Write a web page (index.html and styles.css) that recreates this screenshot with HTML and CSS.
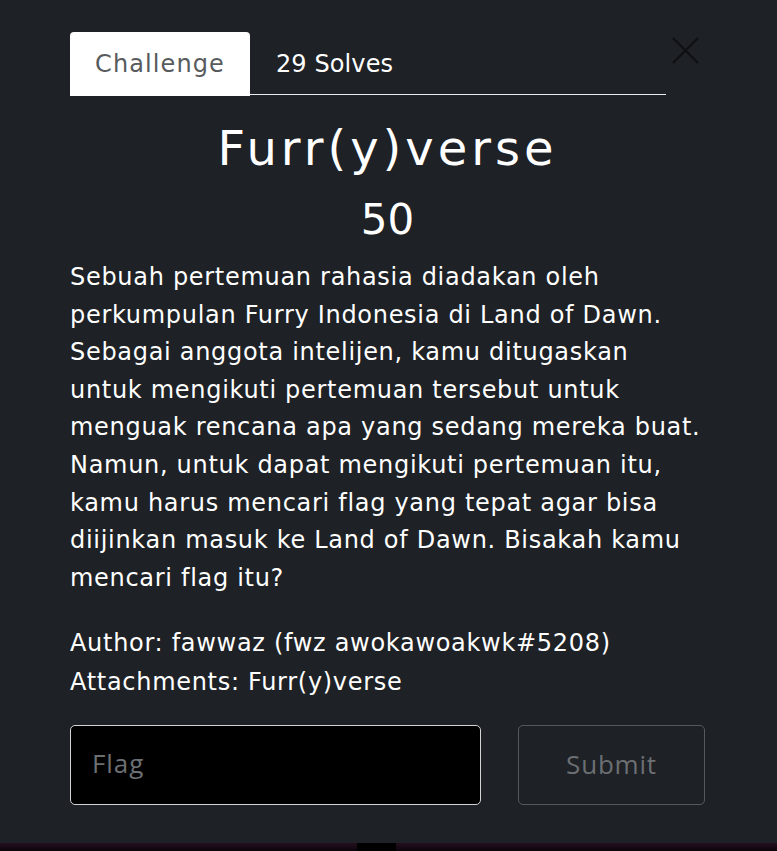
FILE: index.html
```html
<!DOCTYPE html>
<html lang="id">
<head>
<meta charset="utf-8">
<title>Furr(y)verse</title>
<link rel="stylesheet" href="styles.css">
</head>
<body>
<div class="modal">
  <div class="modal-body">
    <div class="header">
      <nav class="tabs">
        <a class="tab active">Challenge</a>
        <a class="tab">29 Solves</a>
      </nav>
      <button class="close" aria-label="Close">
        <svg width="27" height="27" viewBox="0 0 27 27"><path d="M1 1 L26 26 M26 1 L1 26" stroke="#0f1013" stroke-width="2.2" fill="none"/></svg>
      </button>
    </div>
    <h2 class="title">Furr(y)verse</h2>
    <h3 class="value">50</h3>
    <p class="desc">Sebuah pertemuan rahasia diadakan oleh<br>perkumpulan Furry Indonesia di Land of Dawn.<br>Sebagai anggota intelijen, kamu ditugaskan<br>untuk mengikuti pertemuan tersebut untuk<br>menguak rencana apa yang sedang mereka buat.<br>Namun, untuk dapat mengikuti pertemuan itu,<br>kamu harus mencari flag yang tepat agar bisa<br>diijinkan masuk ke Land of Dawn. Bisakah kamu<br>mencari flag itu?</p>
    <p class="meta">Author: fawwaz (fwz awokawoakwk#5208)<br>Attachments: Furr(y)verse</p>
    <form class="submit-row">
      <input class="flag" type="text" placeholder="Flag">
      <button class="submit" type="button">Submit</button>
    </form>
  </div>
</div>
<div class="strip">
  <div class="strip-left"></div>
  <div class="strip-gap"></div>
  <div class="strip-right"></div>
</div>
</body>
</html>
```

FILE: styles.css
```css
* { box-sizing: border-box; }
html, body { margin: 0; padding: 0; }
body {
  background: #1e2125;
  font-family: "DejaVu Sans", sans-serif;
  color: #ffffff;
  width: 777px;
  height: 851px;
  overflow: hidden;
}
.modal {
  height: 843px;
  padding: 32px 0 0 70px;
}
.modal-body {
  width: 635px;
}
.header {
  display: flex;
  align-items: flex-start;
}
.tabs {
  display: flex;
  width: 596px;
  height: 63px;
  border-bottom: 1px solid #e9ecef;
}
.tab {
  display: flex;
  align-items: center;
  height: 64px;
  padding: 0 26px 1px;
  font-size: 24px;
  letter-spacing: 0.1px;
  color: #ffffff;
  border-radius: 4px 4px 0 0;
}
.tab.active {
  background: #ffffff;
  color: #585b5e;
  width: 180px;
  justify-content: center;
  padding: 0 0 1px;
  letter-spacing: 1.1px;
}
.close {
  margin: 5px 0 0 6px;
  padding: 0;
  background: none;
  border: 0;
  width: 27px;
  height: 27px;
  display: block;
}
.close svg { display: block; }
.title {
  margin: 24px 0 0;
  text-align: center;
  font-weight: 400;
  font-size: 48px;
  letter-spacing: 4px;
  line-height: 58px;
}
.value {
  margin: 19px 0 0;
  text-align: center;
  font-weight: 500;
  font-size: 42px;
  line-height: 48px;
}
.desc, .meta {
  font-size: 24px;
  letter-spacing: 0.7px;
  line-height: 37.6px;
  margin: 0;
}
.desc { margin-top: 15px; }
.meta { margin-top: 27px; line-height: 38.6px; }
.submit-row {
  display: flex;
  gap: 37px;
  margin-top: 23px;
}
.flag {
  width: 411px;
  height: 80px;
  background: #000;
  border: 1px solid #d3d3d3;
  border-radius: 5px;
  padding: 0 21px 3px;
  font-family: "Open Sans", sans-serif;
  font-size: 26px;
  letter-spacing: 0.9px;
  color: #fff;
  outline: none;
}
.flag::placeholder { color: #6c6f73; }
.submit {
  width: 187px;
  height: 80px;
  background: transparent;
  border: 1px solid #55585c;
  border-radius: 5px;
  padding-bottom: 3px;
  font-family: "Open Sans", sans-serif;
  font-size: 26px;
  letter-spacing: 0.8px;
  color: #6c6f73;
}
.strip {
  display: flex;
  height: 8px;
}
.strip-left {
  width: 357px;
  background: linear-gradient(#24101f, #0c040b);
}
.strip-right {
  flex: 1;
  background: linear-gradient(#24101f, #0c040b);
}
.strip-gap {
  width: 39px;
  background: #000;
}
```
